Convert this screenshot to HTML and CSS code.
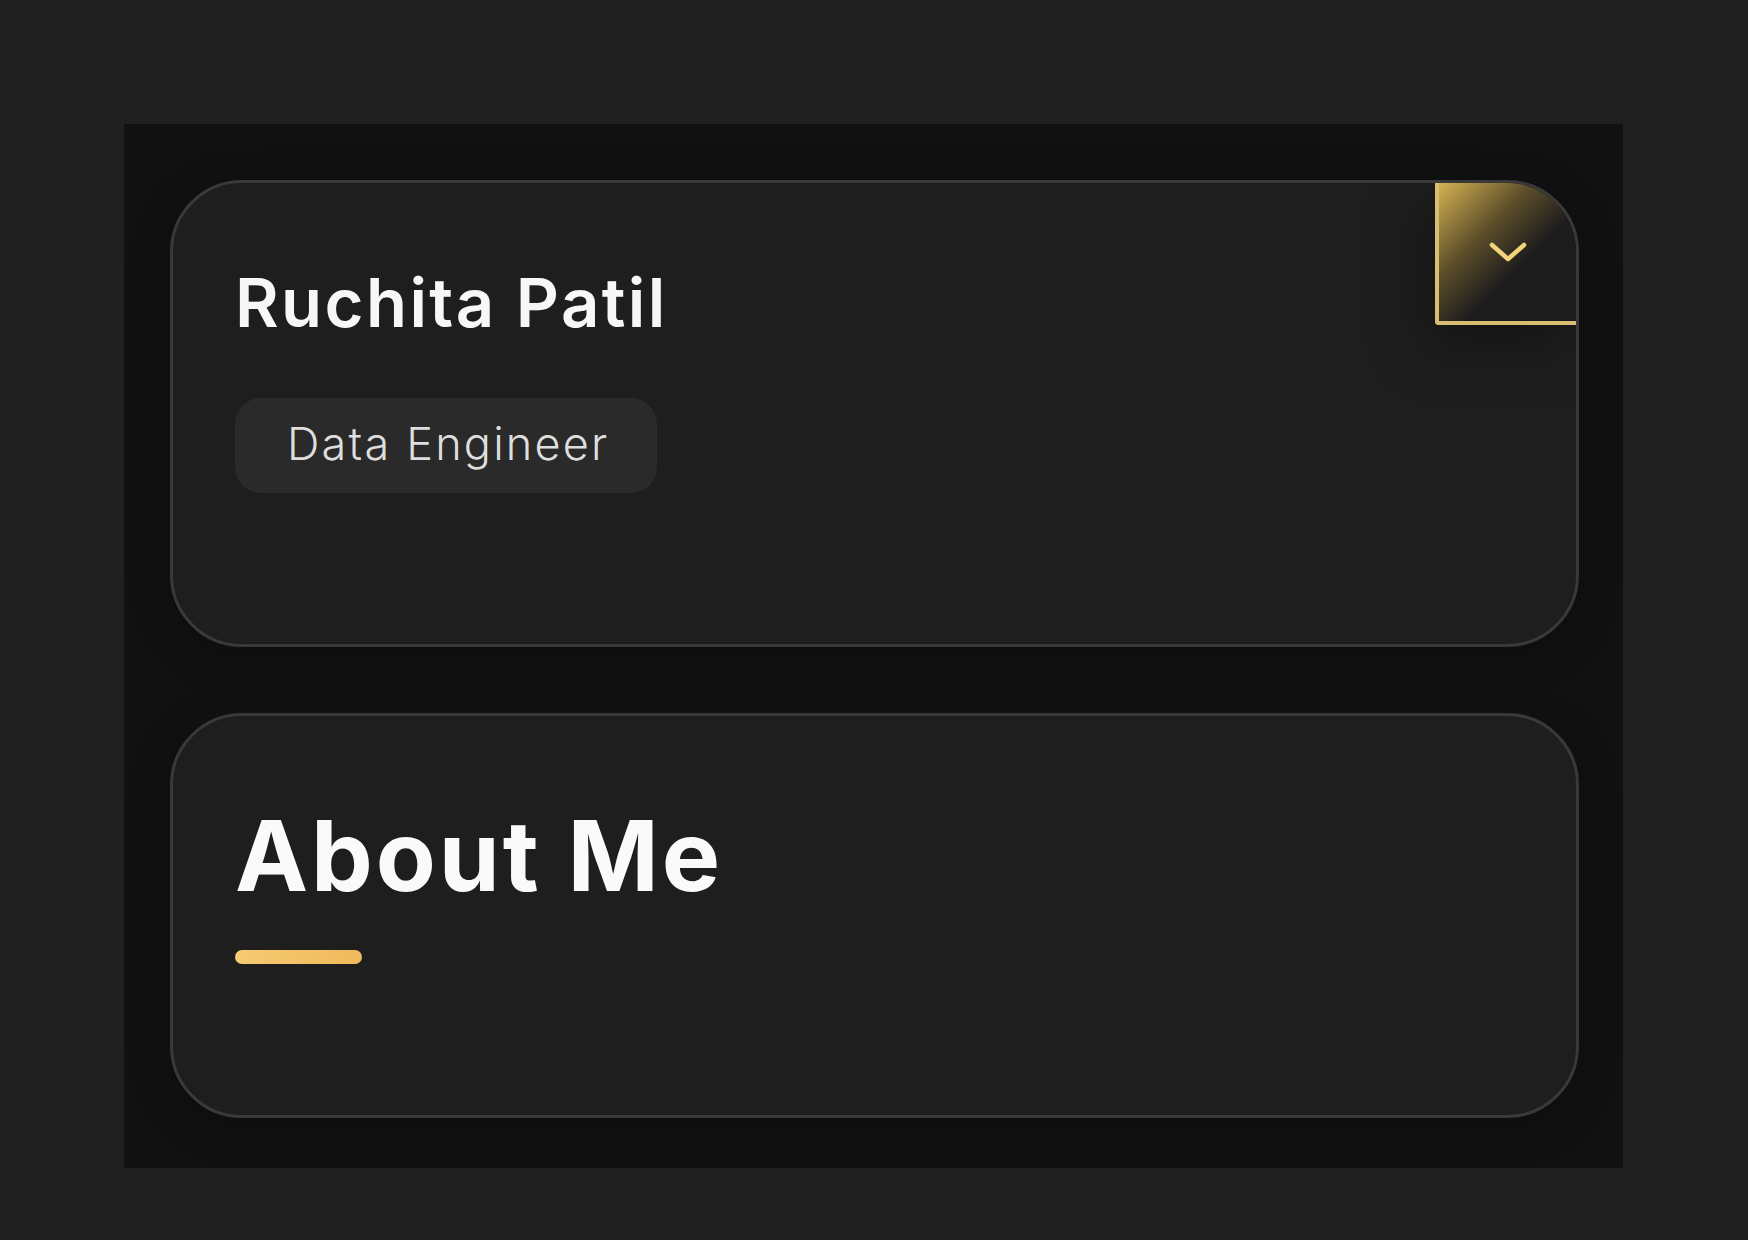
FILE: index.html
```html
<!DOCTYPE html>
<html lang="en">
<head>
<meta charset="utf-8">
<title>Ruchita Patil</title>
<link rel="stylesheet" href="styles.css">
</head>
<body>
<main class="panel">
  <section class="card card-profile">
    <h1 class="name">Ruchita Patil</h1>
    <span class="chip">Data Engineer</span>
    <button class="toggle" aria-label="Expand">
      <svg class="chev" width="40" height="22" viewBox="0 0 40 22" fill="none">
        <path d="M4 4 L20 18 L36 4" stroke="#f3d27a" stroke-width="4.5" stroke-linecap="round" stroke-linejoin="round"/>
      </svg>
    </button>
  </section>
  <section class="card card-about">
    <h2 class="heading">About Me</h2>
    <div class="underline"></div>
  </section>
</main>
</body>
</html>
```

FILE: styles.css
```css
* { box-sizing: border-box; }
html, body { margin: 0; padding: 0; }
body {
  background: #202020;
  font-family: "Inter", "Noto Sans", sans-serif;
  width: 1748px;
  height: 1240px;
  overflow: hidden;
}
.panel {
  margin: 124px 0 0 124px;
  width: 1499px;
  height: 1044px;
  background: #111111;
  padding: 56px 44px 0 46px;
  display: flex;
  flex-direction: column;
  gap: 66px;
}
.card {
  position: relative;
  background: #1e1e1e;
  border: 3px solid #393939;
  border-radius: 72px;
  overflow: hidden;
  padding-left: 62px;
  box-shadow: 0 10px 40px rgba(0,0,0,0.25);
}
.card-profile {
  height: 467px;
  padding-top: 86px;
  display: flex;
  flex-direction: column;
  align-items: flex-start;
}
.card-about {
  height: 405px;
  padding-top: 91px;
}
.name {
  margin: 0;
  font-size: 67px;
  line-height: 1;
  font-weight: 600;
  color: #f7f7f7;
  letter-spacing: 2.4px;
}
.chip {
  margin-top: 62px;
  display: inline-block;
  background: #2a2a2a;
  color: #dedede;
  font-size: 45px;
  font-weight: 300;
  line-height: 1;
  letter-spacing: 2.2px;
  padding: 23px 48px 27px 52px;
  border-radius: 26px;
}
.toggle {
  position: absolute;
  top: 0;
  right: 0;
  width: 141px;
  height: 142px;
  padding: 0;
  margin: 0;
  border: none;
  border-left: 4px solid #d9bd72;
  border-bottom: 4px solid #d9bd72;
  border-bottom-left-radius: 4px;
  background: linear-gradient(135deg, rgba(222,186,86,0.95) 0%, rgba(160,130,55,0.5) 34%, rgba(30,30,30,0) 60%), #1c1c1c;
  box-shadow: -10px 20px 60px rgba(0,0,0,0.35);
  display: flex;
  align-items: center;
  justify-content: center;
  cursor: pointer;
}
.chev {
  display: block;
  margin: -1px 0 0 0;
}
.heading {
  margin: 0;
  font-size: 98px;
  line-height: 1;
  font-weight: 700;
  color: #fafafa;
  letter-spacing: 2.9px;
}
.underline {
  margin-top: 45px;
  width: 127px;
  height: 14px;
  border-radius: 7px;
  background: linear-gradient(90deg, #f6cb72, #f0b95c);
}
```
